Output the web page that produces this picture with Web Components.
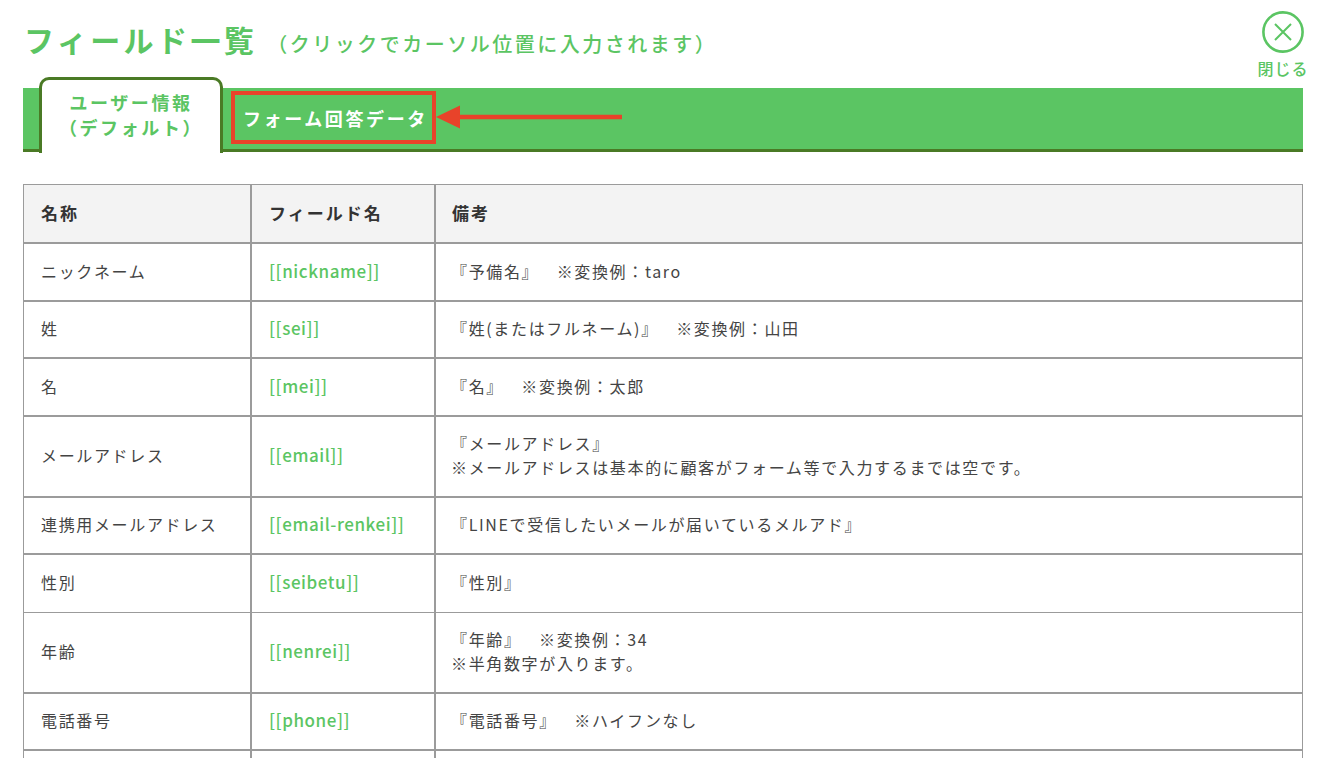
<!DOCTYPE html>
<html lang="ja">
<head>
<meta charset="utf-8">
<title>フィールド一覧</title>
<style>
  html, body { margin: 0; height: 100%; overflow: hidden; background: #fff; }
  body {
    font-family: "Noto Sans CJK JP", "Noto Sans", sans-serif;
    color: #444;
    --green: #5bc563;
    --green-dark: #4a7a25;
    --line: #9b9b9b;
  }
</style>
</head>
<body>
<field-panel>
  <panel-header slot="header" title-text="フィールド一覧" hint="（クリックでカーソル位置に入力されます）"></panel-header>
  <tab-bar slot="tabs">
    <tab-item active>ユーザー情報<br>（デフォルト）</tab-item>
    <tab-item>フォーム回答データ</tab-item>
  </tab-bar>
  <field-table>
    <field-row head thick name="名称" token="フィールド名">備考</field-row>
    <field-row thick name="ニックネーム" token="[[nickname]]">『予備名』　 ※変換例：taro</field-row>
    <field-row thick name="姓" token="[[sei]]">『姓(またはフルネーム)』　 ※変換例：山田</field-row>
    <field-row thick name="名" token="[[mei]]">『名』　 ※変換例：太郎</field-row>
    <field-row thick tall name="メールアドレス" token="[[email]]">『メールアドレス』<br>※メールアドレスは基本的に顧客がフォーム等で入力するまでは空です。</field-row>
    <field-row thick name="連携用メールアドレス" token="[[email-renkei]]">『LINEで受信したいメールが届いているメルアド』</field-row>
    <field-row name="性別" token="[[seibetu]]">『性別』</field-row>
    <field-row thick tall name="年齢" token="[[nenrei]]">『年齢』　 ※変換例：34<br>※半角数字が入ります。</field-row>
    <field-row thick name="電話番号" token="[[phone]]">『電話番号』　 ※ハイフンなし</field-row>
    <field-row name="" token=""></field-row>
  </field-table>
</field-panel>

<script>
  // Small helper: every element gets an open shadow root from a template string
  function shadow(el, html) {
    el.attachShadow({ mode: 'open' }).innerHTML = html;
    return el.shadowRoot;
  }

  class FieldPanel extends HTMLElement {
    constructor() {
      super();
      shadow(this, `
        <style>
          :host { display: block; padding: 0 19px 0 23px; height: 100vh; overflow: hidden; box-sizing: border-box; }
        </style>
        <slot name="header"></slot>
        <slot name="tabs"></slot>
        <slot></slot>
      `);
    }
  }

  class PanelHeader extends HTMLElement {
    connectedCallback() {
      shadow(this, `
        <style>
          :host { display: flex; justify-content: space-between; align-items: flex-start; height: 88px; color: var(--green); }
          .title { display: flex; align-items: baseline; padding: 17px 0 0 1px; line-height: 44px; }
          h1 { margin: 0; font-size: 30px; font-weight: 700; letter-spacing: 3.4px; }
          span { margin-left: 10px; font-size: 20px; font-weight: 500; letter-spacing: 2.5px; }
          .close { display: flex; flex-direction: column; align-items: center; width: 50px; margin: 11px -5px 0 0; font-size: 16px; font-weight: 500; letter-spacing: 1px; line-height: 24px; white-space: nowrap; }
          svg { display: block; width: 42px; height: 42px; margin-bottom: 3px; }
        </style>
        <div class="title">
          <h1>${this.getAttribute('title-text')}</h1>
          <span>${this.getAttribute('hint')}</span>
        </div>
        <div class="close">
          <svg viewBox="0 0 42 42" fill="none" stroke="currentColor" aria-hidden="true">
            <circle cx="21" cy="21" r="19.6" stroke-width="2.6"/>
            <path d="M13 13 29 29M29 13 13 29" stroke-width="2"/>
          </svg>
          閉じる
        </div>
      `);
    }
  }

  class TabBar extends HTMLElement {
    constructor() {
      super();
      shadow(this, `
        <style>
          :host { display: flex; position: relative; height: 61px; padding-left: 16px; gap: 20px; align-items: center; background: var(--green); border-bottom: 3px solid var(--green-dark); }
          svg { position: absolute; left: 208px; top: 3px; width: 400px; height: 53px; overflow: visible; }
        </style>
        <slot></slot>
        <svg viewBox="0 0 400 53" fill="none" aria-hidden="true">
          <rect x="2" y="2" width="201" height="49" stroke="#e8432a" stroke-width="4"/>
          <path d="M205 26 229 14.500V37.500Z" fill="#e8432a"/>
          <path d="M225 26H391" stroke="#e8432a" stroke-width="4.500"/>
        </svg>
      `);
    }
  }

  class TabItem extends HTMLElement {
    constructor() {
      super();
      shadow(this, `
        <style>
          :host { display: block; font-size: 18px; font-weight: 700; letter-spacing: 2.6px; line-height: 25px; color: #fff; white-space: nowrap; }
          :host([active]) {
            box-sizing: border-box; width: 184px; height: 76px; margin-top: -11px; align-self: flex-start; padding-top: 10px;
            color: var(--green); background: #fff; text-align: center;
            border: 3px solid var(--green-dark); border-bottom: 0; border-radius: 10px 10px 0 0;
          }
        </style>
        <slot></slot>
      `);
    }
  }

  class FieldTable extends HTMLElement {
    constructor() {
      super();
      shadow(this, `
        <style>
          :host { display: block; margin-top: 32px; border: 1px solid var(--line); border-bottom: 0; }
        </style>
        <slot></slot>
      `);
    }
  }

  class FieldRow extends HTMLElement {
    connectedCallback() {
      shadow(this, `
        <style>
          :host { display: grid; grid-template-columns: 226px 184px 1fr; min-height: 57.500px; box-sizing: border-box; border-bottom: 1px solid var(--line); font-size: 16px; letter-spacing: 1.65px; word-spacing: 2.5px; line-height: 24.500px; }
          :host([thick]) { border-bottom-width: 2px; }
          :host([tall]) { min-height: 81px; }
          :host([head]) { min-height: 59px; background: #f3f3f3; font-weight: 700; color: #333; font-size: 17px; letter-spacing: 2px; }
          div { display: flex; align-items: center; box-sizing: border-box; padding: 0 10px 2px 17px; }
          :host([head]) div { padding-bottom: 0; }
          div + div { border-left: 2px solid var(--line); }
          .token { color: var(--green); font-weight: 500; font-size: 17px; letter-spacing: .55px; }
          :host([head]) .token { color: inherit; font-weight: 700; letter-spacing: 2px; }
          .note { display: block; padding-left: 15px; align-self: center; border: 0; }
          :host([head]) .note { padding-left: 16px; }
          .wrap { border-left: 2px solid var(--line); padding: 0; height: 100%; }
        </style>
        <div>${this.getAttribute('name')}</div>
        <div class="token">${this.getAttribute('token')}</div>
        <div class="wrap"><div class="note"><slot></slot></div></div>
      `);
    }
  }

  customElements.define('field-panel', FieldPanel);
  customElements.define('panel-header', PanelHeader);
  customElements.define('tab-bar', TabBar);
  customElements.define('tab-item', TabItem);
  customElements.define('field-table', FieldTable);
  customElements.define('field-row', FieldRow);
</script>
</body>
</html>
